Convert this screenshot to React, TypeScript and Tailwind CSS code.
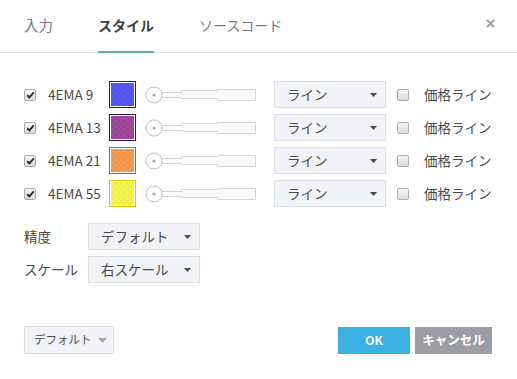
import { useState } from 'react';

const font = 'font-["Noto_Sans_CJK_JP","Noto_Sans",sans-serif]';

const rows = [
  {
    label: '4EMA 9',
    border: 'border-[#1414c8]',
    fill: 'bg-[#3c3cf5]/85',
  },
  {
    label: '4EMA 13',
    border: 'border-[#4a0a4e]',
    fill: 'bg-[#902c8e]/85',
  },
  {
    label: '4EMA 21',
    border: 'border-[#c6580e]',
    fill: 'bg-[#f58a35]/85',
  },
  {
    label: '4EMA 55',
    border: 'border-[#d2cc00]',
    fill: 'bg-[#f2f230]/85',
  },
];

function Check({ checked }: { checked?: boolean }) {
  return (
    <div className="flex size-3 shrink-0 items-center justify-center rounded-[2px] border border-[#a9abaf] bg-gradient-to-b from-[#f4f4f4] to-[#dcdcdc]">
      {checked && (
        <svg width="9" height="8" viewBox="0 0 9 8">
          <path
            d="M1.2 4.2 L3.4 6.3 L7.8 1.4"
            fill="none"
            stroke="#2b2b2b"
            strokeWidth="1.9"
          />
        </svg>
      )}
    </div>
  );
}

function Caret({ light }: { light?: boolean }) {
  return light ? (
    <svg width="9" height="5" viewBox="0 0 9 5" className="shrink-0">
      <path d="M0 0 H9 L4.5 5 Z" fill="#a3a5a9" />
    </svg>
  ) : (
    <svg width="7" height="4" viewBox="0 0 7 4" className="shrink-0">
      <path d="M0 0 H7 L3.5 4 Z" fill="#4a4a4a" />
    </svg>
  );
}

function Select({ value }: { value: string }) {
  return (
    <div className="flex h-[27px] w-28 shrink-0 items-center justify-between border border-[#dcdfe4] bg-[#f1f3f6] pr-2 pl-3 text-[13.5px] text-[#4a4a4a]">
      <span>{value}</span>
      <Caret />
    </div>
  );
}

function Slider() {
  return (
    <svg width="111" height="18" viewBox="0 0 111 18" className="shrink-0">
      <path
        d="M17 6.5 H36.5 V4.5 H72.5 V3.5 H110.5 V14.5 H72.5 V12.5 H36.5 V11.5 H17"
        fill="#fafafa"
        stroke="#d3d5d9"
      />
      <circle cx="9" cy="9" r="8" fill="#fff" stroke="#bfc2c8" />
      <circle cx="9" cy="9" r="1.6" fill="#a3a6ad" />
    </svg>
  );
}

function Swatch({ border, fill }: { border: string; fill: string }) {
  return (
    <div className={`size-[27px] shrink-0 border ${border} bg-white p-px`}>
      <div className="size-full bg-[conic-gradient(#d0d0d0_25%,#fff_0_50%,#d0d0d0_0_75%,#fff_0)] bg-[length:6px_6px]">
        <div className={`size-full ${fill}`} />
      </div>
    </div>
  );
}

export default function App() {
  const [tab] = useState('style');

  return (
    <div className={`h-[379px] w-[517px] bg-white ${font} text-[#4a4a4a]`}>
      <div className="flex h-[53px] items-stretch justify-between border-b border-[#e0e3e8] pr-[22px] pl-6">
        <div className="flex gap-[45px]">
          <div className="-mb-px flex items-center pb-[3px] text-[14.5px] text-[#777c84]">
            入力
          </div>
          <div
            className={`-mb-px flex items-center border-b-2 pb-px text-[14px] font-bold ${
              tab === 'style'
                ? 'border-[#53b987] text-[#3b3f45]'
                : 'border-transparent'
            }`}
          >
            スタイル
          </div>
          <div className="-mb-px flex items-center pb-[3px] text-[14px] text-[#777c84]">
            ソースコード
          </div>
        </div>
        <div className="flex items-center pb-[6px]">
          <svg width="9" height="9" viewBox="0 0 9 9">
            <path d="M1 1 L8 8 M8 1 L1 8" stroke="#9da1a8" strokeWidth="2" />
          </svg>
        </div>
      </div>

      <div className="flex flex-col gap-[6px] pt-7 pl-6">
        {rows.map((r) => (
          <div key={r.label} className="flex h-[27px] items-center">
            <Check checked />
            <span className="ml-3 w-[61px] text-[13.5px]">{r.label}</span>
            <Swatch border={r.border} fill={r.fill} />
            <div className="ml-[9px]">
              <Slider />
            </div>
            <div className="ml-[18px]">
              <Select value="ライン" />
            </div>
            <div className="ml-[11px]">
              <Check />
            </div>
            <span className="ml-[15px] text-[13.5px]">価格ライン</span>
          </div>
        ))}
      </div>

      <div className="mt-4 flex flex-col gap-[6px] pl-6 text-[13.5px]">
        <div className="flex items-center">
          <span className="w-16">精度</span>
          <Select value="デフォルト" />
        </div>
        <div className="flex items-center">
          <span className="w-16">スケール</span>
          <Select value="右スケール" />
        </div>
      </div>

      <div className="mt-[43px] flex items-center justify-between pr-[25px] pl-6">
        <div className="flex h-7 w-[90px] items-center gap-[6px] border border-[#d9dce1] bg-[#f1f3f6] pl-[9px] text-[11.5px] whitespace-nowrap text-[#4a4a4a]">
          <span>デフォルト</span>
          <Caret light />
        </div>
        <div className="flex gap-[5px]">
          <div className="flex h-[27px] w-[72px] items-center justify-center bg-[#3bb2e3] text-[12px] font-bold text-white">
            OK
          </div>
          <div className="flex h-[27px] w-[77px] items-center justify-center bg-[#9b9da2] text-[12.5px] font-bold text-white">
            キャンセル
          </div>
        </div>
      </div>
    </div>
  );
}
